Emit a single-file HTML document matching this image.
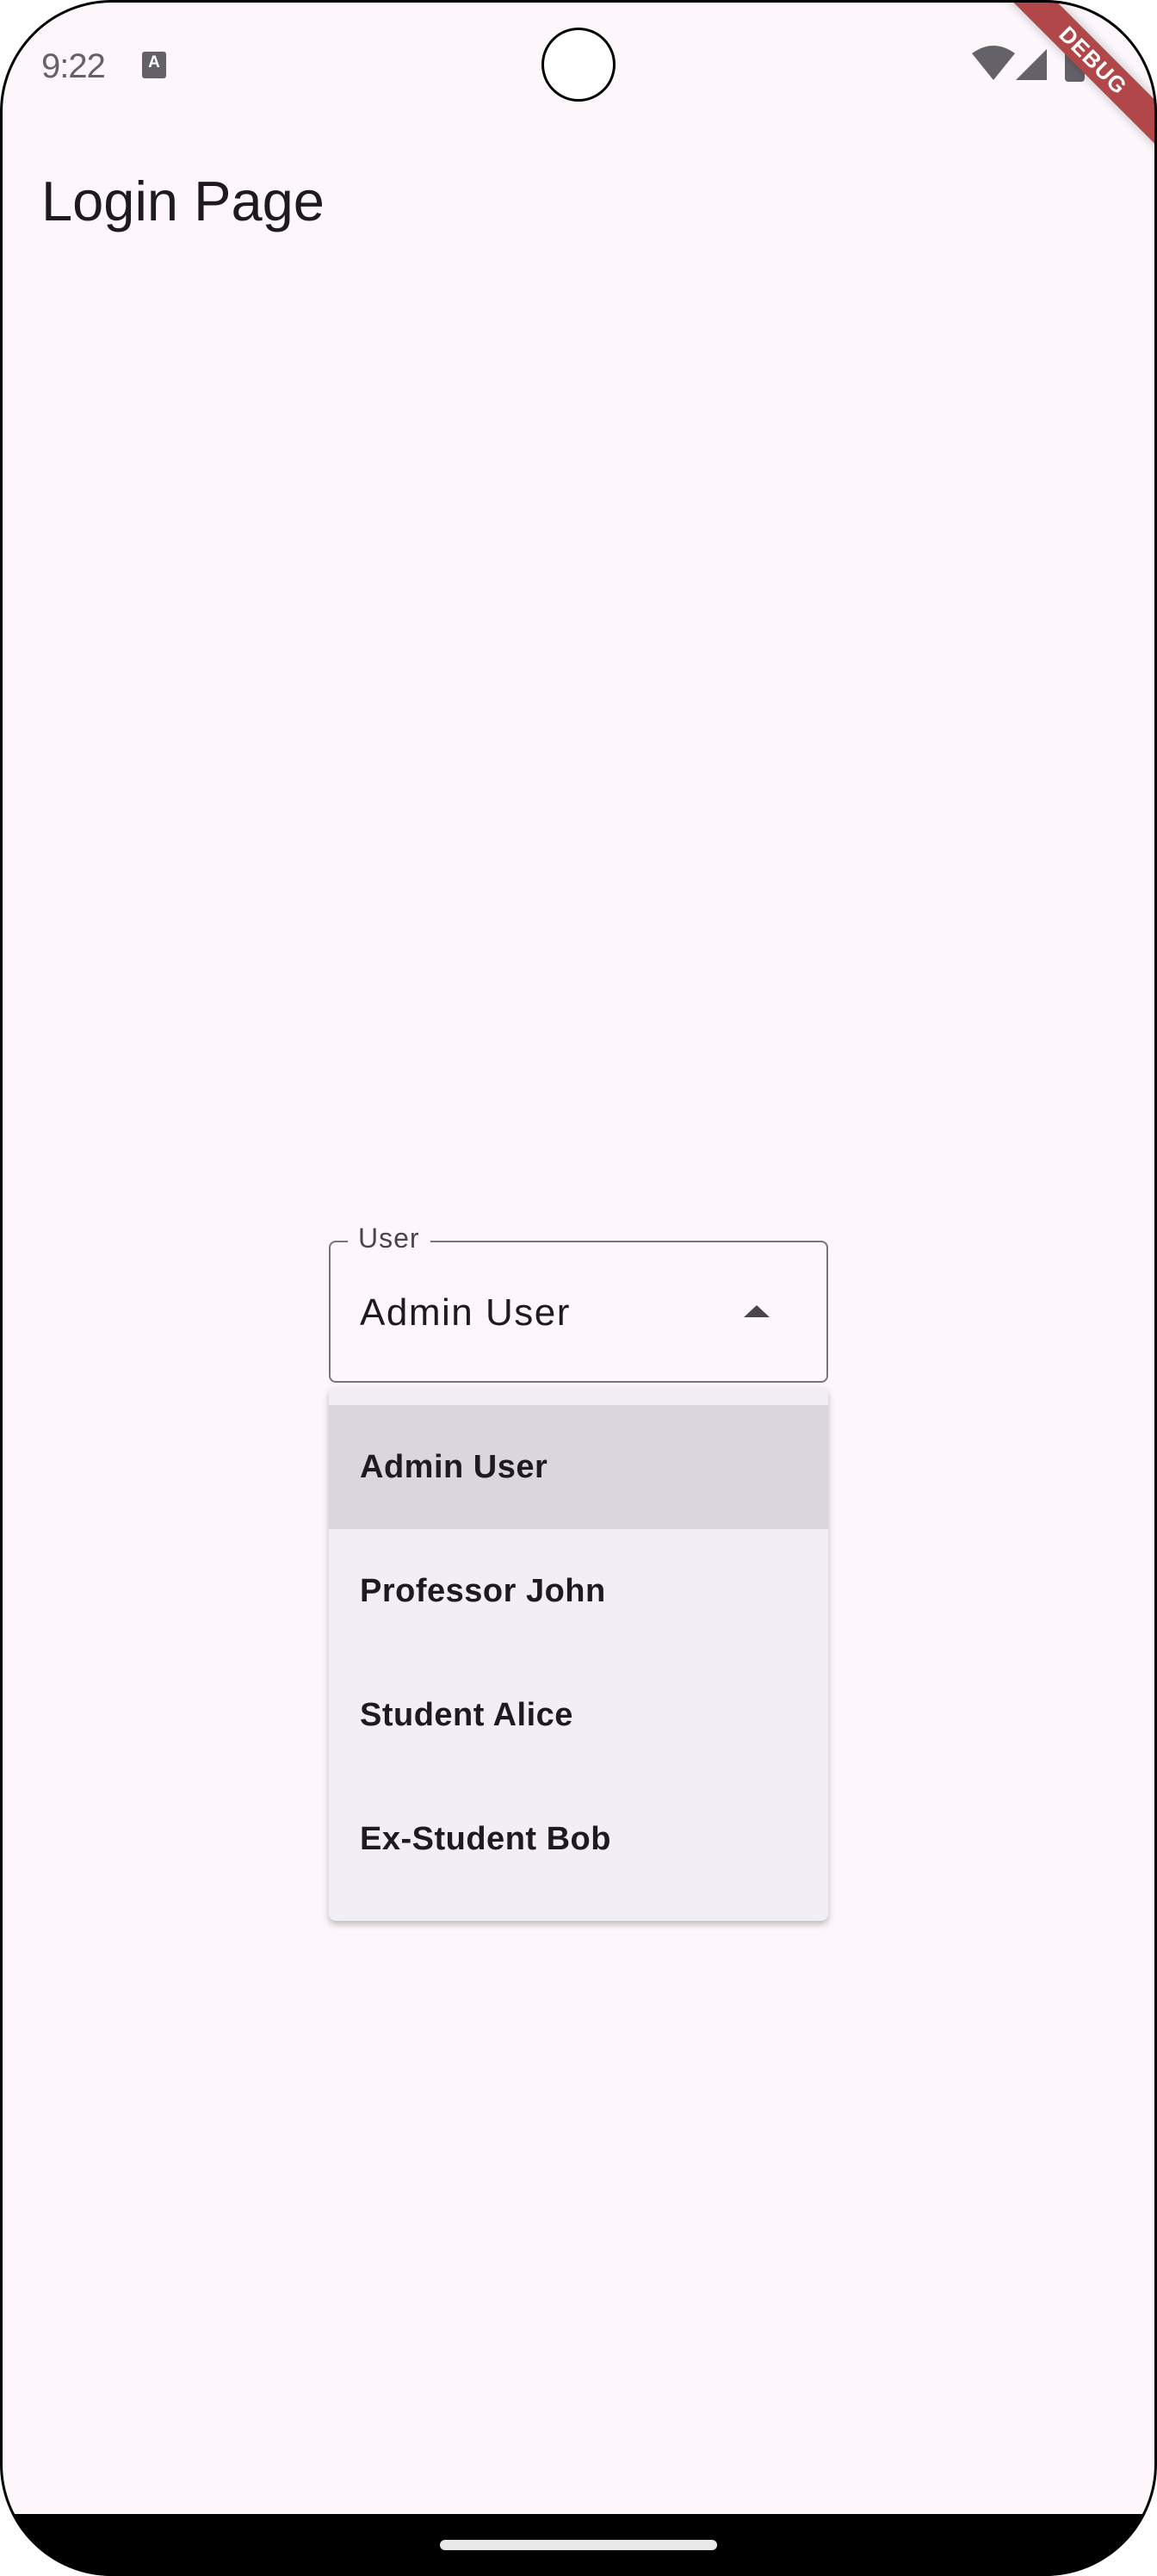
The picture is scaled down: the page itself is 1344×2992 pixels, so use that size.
<!DOCTYPE html>
<html><head><meta charset="utf-8">
<style>
*{margin:0;padding:0;box-sizing:border-box}
html,body{width:1344px;height:2992px;background:#fff;overflow:hidden;font-family:"Liberation Sans",sans-serif}
.screen{position:absolute;left:0;top:0;width:1344px;height:2992px;border-radius:130px;overflow:hidden;background:#fdf7fc}
.frame{position:absolute;left:0;top:0;width:1344px;height:2992px;border-radius:130px;border:3px solid #000;pointer-events:none}
.nav{position:absolute;left:0;right:0;top:2920px;bottom:0;background:#000}
.pill{position:absolute;left:511px;top:2950px;width:322px;height:12px;border-radius:6px;background:#e8e8e8}
.time{position:absolute;left:48px;top:55px;font-size:40px;color:#646268;letter-spacing:-1px}
.aicon{position:absolute;left:165px;top:60px;width:28px;height:31px;border-radius:3px;background:#646268;color:#fff;font-size:19px;font-weight:bold;text-align:center;line-height:26px}
.cam{position:absolute;left:629px;top:32px;width:86px;height:86px;border-radius:50%;background:#fff;border:3px solid #000}
.title{position:absolute;left:48px;top:196px;font-size:65px;color:#1d1b20}
.field{position:absolute;left:382px;top:1441px;width:580px;height:165px;border:2px solid #79747e;border-radius:8px}
.label{position:absolute;left:404px;top:1420px;padding:0 12px;background:#fdf7fc;font-size:32px;color:#49454f;letter-spacing:1px}
.val{position:absolute;left:418px;top:1500px;font-size:44px;color:#1d1b20;letter-spacing:1.5px}
.menu{position:absolute;left:382px;top:1611px;width:580px;height:620px;border-radius:8px;background:#f2eef5;box-shadow:0 4px 8px rgba(0,0,0,.25);overflow:hidden}
.item{position:absolute;left:0;width:580px;height:144px;font-size:38px;font-weight:bold;color:#1d1b20;padding-left:36px;line-height:144px;letter-spacing:0.5px}
.sel{background:#dbd5de}
.banner{position:absolute;left:1120px;top:52px;width:300px;height:36px;background:#b2474a;transform:rotate(45deg);color:#fff;font-weight:bold;font-size:26px;text-align:center;line-height:36px;letter-spacing:1px;box-shadow:0 0 12px rgba(0,0,0,.25)}
</style></head><body>
<div class="screen">
<div class="time">9:22</div>
<div class="aicon">A</div>
<div class="cam"></div>
<svg style="position:absolute;left:1125px;top:52px" width="140" height="46" viewBox="0 0 140 46">
<path d="M4 10 Q29 -8 54 10 L29 41 Z" fill="#646268"/>
<path d="M91 5 L91 41 L55 41 Z" fill="#646268"/>
<rect x="112" y="4" width="23" height="39" rx="4" fill="#646268"/>
</svg>
<div class="title">Login Page</div>
<div class="field"></div>
<div class="label">User</div>
<div class="val">Admin User</div>
<svg style="position:absolute;left:862px;top:1514px" width="34" height="17" viewBox="0 0 34 17"><path d="M2 16 L17 2 L32 16 Z" fill="#49454f"/></svg>
<div class="menu">
<div class="item sel" style="top:21px">Admin User</div>
<div class="item" style="top:165px">Professor John</div>
<div class="item" style="top:309px">Student Alice</div>
<div class="item" style="top:453px">Ex-Student Bob</div>
</div>
<div class="banner">DEBUG</div>
<div class="nav"></div>
<div class="pill"></div>
</div>
<div class="frame"></div>
</body></html>
